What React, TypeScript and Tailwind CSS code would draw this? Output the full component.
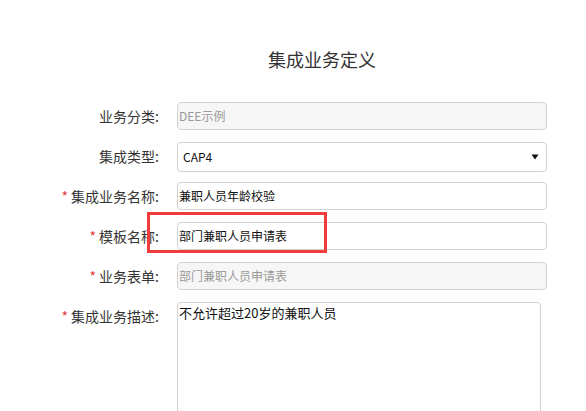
import React from "react";

const FONT = "font-['Noto_Sans_CJK_SC','Noto_Sans',sans-serif]";

function Label({ text, required }: { text: string; required?: boolean }) {
  return (
    <div className="flex h-[28px] w-[160px] items-center justify-end pr-[1px] text-[14px] text-[#333]">
      {required && <span className="mr-[3px] text-[#e4393c]">*</span>}
      <span>{text}:</span>
    </div>
  );
}

function Row({
  label,
  required,
  children,
  extra,
}: {
  label: string;
  required?: boolean;
  children: React.ReactNode;
  extra?: React.ReactNode;
}) {
  return (
    <div className="relative flex h-[40px] items-start gap-[17px]">
      <Label text={label} required={required} />
      {children}
      {extra}
    </div>
  );
}

function TextInput({ value, disabled }: { value: string; disabled?: boolean }) {
  return (
    <div
      className={
        "flex h-[28px] w-[370px] items-center rounded-[4px] border border-[#d2d2d2] pl-[1px] text-[12px] " +
        (disabled ? "bg-[#f6f6f6] text-[#9a9a9a]" : "bg-white text-[#111]")
      }
    >
      {value}
    </div>
  );
}

export default function App() {
  return (
    <div className={`h-[411px] w-[586px] overflow-hidden bg-white ${FONT}`}>
      <div className="pl-[58px] pt-[47px] text-center text-[18px] leading-[24px] text-[#333]">
        集成业务定义
      </div>

      <div className="mt-[31px]">
        <Row label="业务分类">
          <TextInput value="DEE示例" disabled />
        </Row>

        <Row label="集成类型">
          <div className="flex h-[30px] w-[370px] items-center justify-between rounded-[4px] border border-[#d2d2d2] bg-white pl-[5px] pr-[7px] text-[12px] text-[#111]">
            <span>CAP4</span>
            <svg width="8" height="6" viewBox="0 0 8 6">
              <path d="M0.5 0.5 H7.5 L4 5.5 Z" fill="#111" />
            </svg>
          </div>
        </Row>

        <Row label="集成业务名称" required>
          <TextInput value="兼职人员年龄校验" />
        </Row>

        <Row
          label="模板名称"
          required
          extra={
            <div className="pointer-events-none absolute left-[147px] top-[-10px] h-[41px] w-[180px] border-[3px] border-[#f23c3c]" />
          }
        >
          <TextInput value="部门兼职人员申请表" />
        </Row>

        <Row label="业务表单" required>
          <TextInput value="部门兼职人员申请表" disabled />
        </Row>

        <div className="flex items-start gap-[17px]">
          <Label text="集成业务描述" required />
          <div className="h-[140px] w-[364px] rounded-[4px] border border-[#d2d2d2] bg-white pl-[1px] text-[13px] leading-[20px] text-[#111]">
            不允许超过20岁的兼职人员
          </div>
        </div>
      </div>
    </div>
  );
}
